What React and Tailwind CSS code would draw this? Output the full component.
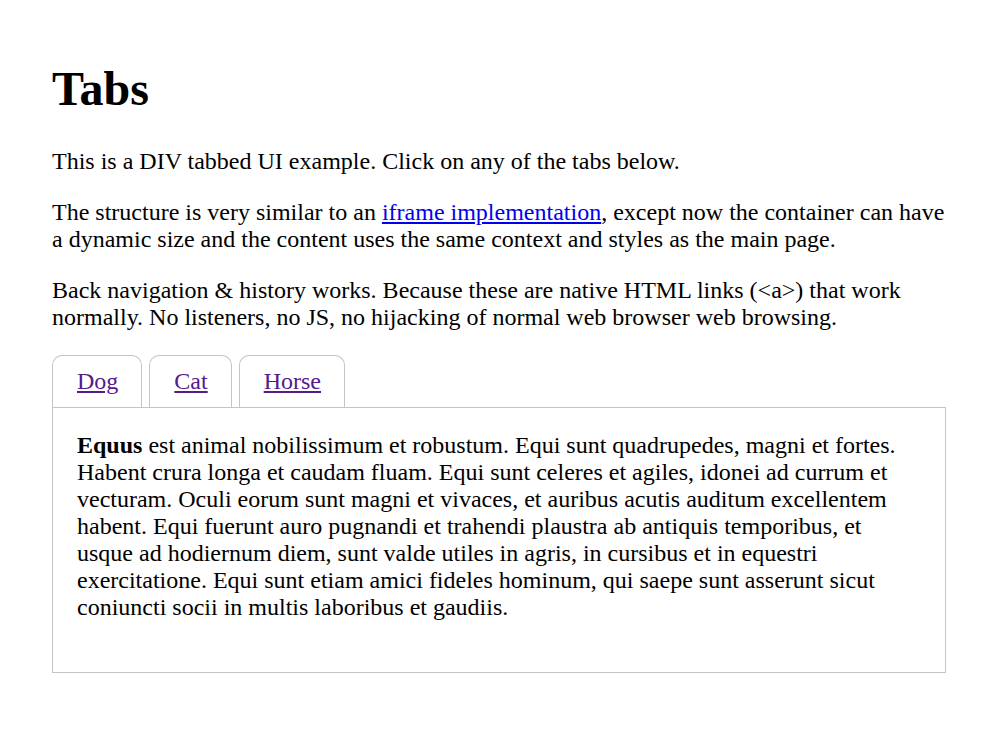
import React, { useState } from 'react';

const tabs = [
  { id: 'dog', label: 'Dog' },
  { id: 'cat', label: 'Cat' },
  { id: 'horse', label: 'Horse' },
];

function App() {
  const [active, setActive] = useState('horse');

  return (
    <div className="min-h-screen bg-white text-black" style={{ fontFamily: '"Liberation Serif", "Times New Roman", serif' }}>
      <div className="w-[894px] ml-[52px] pt-[62px] text-[24px] leading-[27px]">
        <h1 className="text-[48px] font-bold leading-[54px] mb-[32px]">Tabs</h1>

        <p className="mb-[24px]">This is a DIV tabbed UI example. Click on any of the tabs below.</p>

        <p className="mb-[24px]">
          The structure is very similar to an{' '}
          <a href="#iframe" className="text-[#0000ee] underline">iframe implementation</a>, except now the container can
          have a dynamic size and the content uses the same context and styles as the main page.
        </p>

        <p>
          Back navigation &amp; history works. Because these are native HTML links (&lt;a&gt;) that work normally. No
          listeners, no JS, no hijacking of normal web browser web browsing.
        </p>

        {/* tab headers */}
        <div className="flex gap-[7px] mt-[24px]">
          {tabs.map((tab) => (
            <div key={tab.id} className="border border-b-0 border-[#c4c4c4] rounded-t-[10px] pl-6 pr-[23px] py-3">
              <a
                href={`#${tab.id}`}
                onClick={(e) => {
                  e.preventDefault();
                  setActive(tab.id);
                }}
                className="text-[#551a8b] underline"
              >
                {tab.label}
              </a>
            </div>
          ))}
        </div>

        {/* tab content */}
        <div className="border border-[#c4c4c4] h-[266px] px-6 pt-[24px]">
          {active === 'horse' && (
            <p>
              <b>Equus</b> est animal nobilissimum et robustum. Equi sunt quadrupedes, magni et fortes. Habent crura
              longa et caudam fluam. Equi sunt celeres et agiles, idonei ad currum et vecturam. Oculi eorum sunt magni et
              vivaces, et auribus acutis auditum excellentem habent. Equi fuerunt auro pugnandi et trahendi plaustra ab
              antiquis temporibus, et usque ad hodiernum diem, sunt valde utiles in agris, in cursibus et in equestri
              exercitatione. Equi sunt etiam amici fideles hominum, qui saepe sunt asserunt sicut coniuncti socii in
              multis laboribus et gaudiis.
            </p>
          )}
          {active === 'dog' && (
            <p>
              <b>Canis</b> est animal fidele et amicum hominis.
            </p>
          )}
          {active === 'cat' && (
            <p>
              <b>Felis</b> est animal parvum et agile.
            </p>
          )}
        </div>
      </div>
    </div>
  );
}

export default App;
